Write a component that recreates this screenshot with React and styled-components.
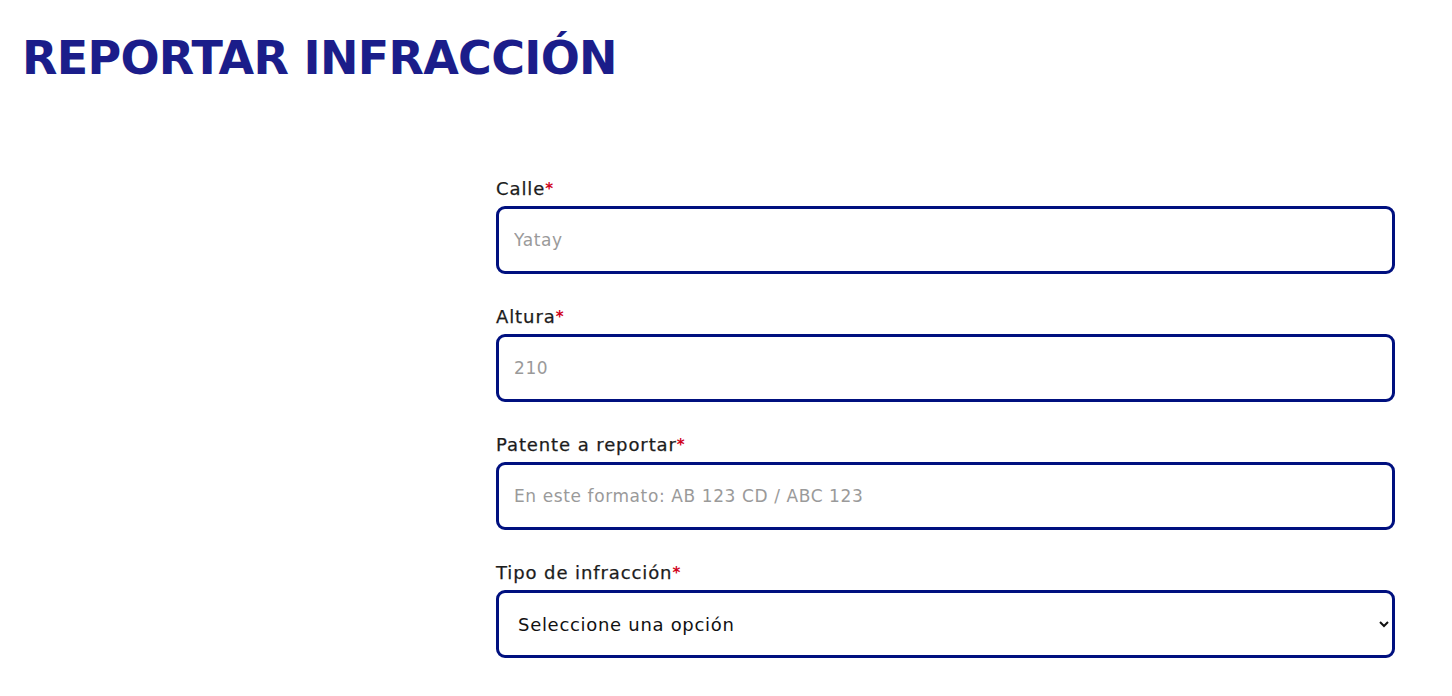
import React from "react";
import styled, { createGlobalStyle } from "styled-components";

const Global = createGlobalStyle`
  html, body { margin: 0; padding: 0; background: #fff; }
  body { font-family: "DejaVu Sans", "Noto Sans", sans-serif; }
  * { box-sizing: border-box; }
`;

const Page = styled.div`
  padding: 30px 57px 40px 22px;
`;

const Title = styled.h1`
  margin: 0;
  font-family: "DejaVu Sans", sans-serif;
  font-weight: 800;
  font-size: 46px;
  line-height: 56px;
  letter-spacing: -0.7px;
  color: #1b1d8a;
`;

const Layout = styled.div`
  display: grid;
  grid-template-columns: 474px 1fr;
  margin-top: 92px;
`;

const Form = styled.form`
  grid-column: 2;
  display: flex;
  flex-direction: column;
  gap: 32px;
`;

const Field = styled.div`
  display: flex;
  flex-direction: column;
  gap: 6px;
`;

const Label = styled.label`
  font-size: 18px;
  font-weight: 500;
  letter-spacing: 0.9px;
  color: #1c1c1c;
  line-height: 22px;
  -webkit-text-stroke: 0.25px #1c1c1c;
`;

const Req = styled.span`
  color: #d0021b;
  font-size: 15px;
  font-weight: 700;
  vertical-align: top;
  letter-spacing: 0;
  -webkit-text-stroke: 0;
`;

const Input = styled.input`
  height: 68px;
  width: 100%;
  border: 3px solid #00107f;
  border-radius: 9px;
  padding: 0 15px;
  font-family: inherit;
  font-size: 17px;
  letter-spacing: 0.6px;
  color: #333;
  outline: none;
  &::placeholder { color: #9a9a9a; }
`;

const Select = styled.select`
  height: 68px;
  width: 100%;
  border: 3px solid #00107f;
  border-radius: 9px;
  padding: 0 15px;
  font-family: inherit;
  font-size: 18px;
  letter-spacing: 0.7px;
  color: #111;
  background: #fff;
  outline: none;
`;

const fields = [
  { label: "Calle", placeholder: "Yatay" },
  { label: "Altura", placeholder: "210" },
  { label: "Patente a reportar", placeholder: "En este formato: AB 123 CD / ABC 123" },
];

export default function App() {
  return (
    <Page>
      <Global />
      <Title>REPORTAR INFRACCIÓN</Title>
      <Layout>
        <Form>
          {fields.map((f) => (
            <Field key={f.label}>
              <Label>
                {f.label}
                <Req>*</Req>
              </Label>
              <Input placeholder={f.placeholder} />
            </Field>
          ))}
          <Field>
            <Label>
              Tipo de infracción<Req>*</Req>
            </Label>
            <Select defaultValue="">
              <option value="">Seleccione una opción</option>
            </Select>
          </Field>
        </Form>
      </Layout>
    </Page>
  );
}
